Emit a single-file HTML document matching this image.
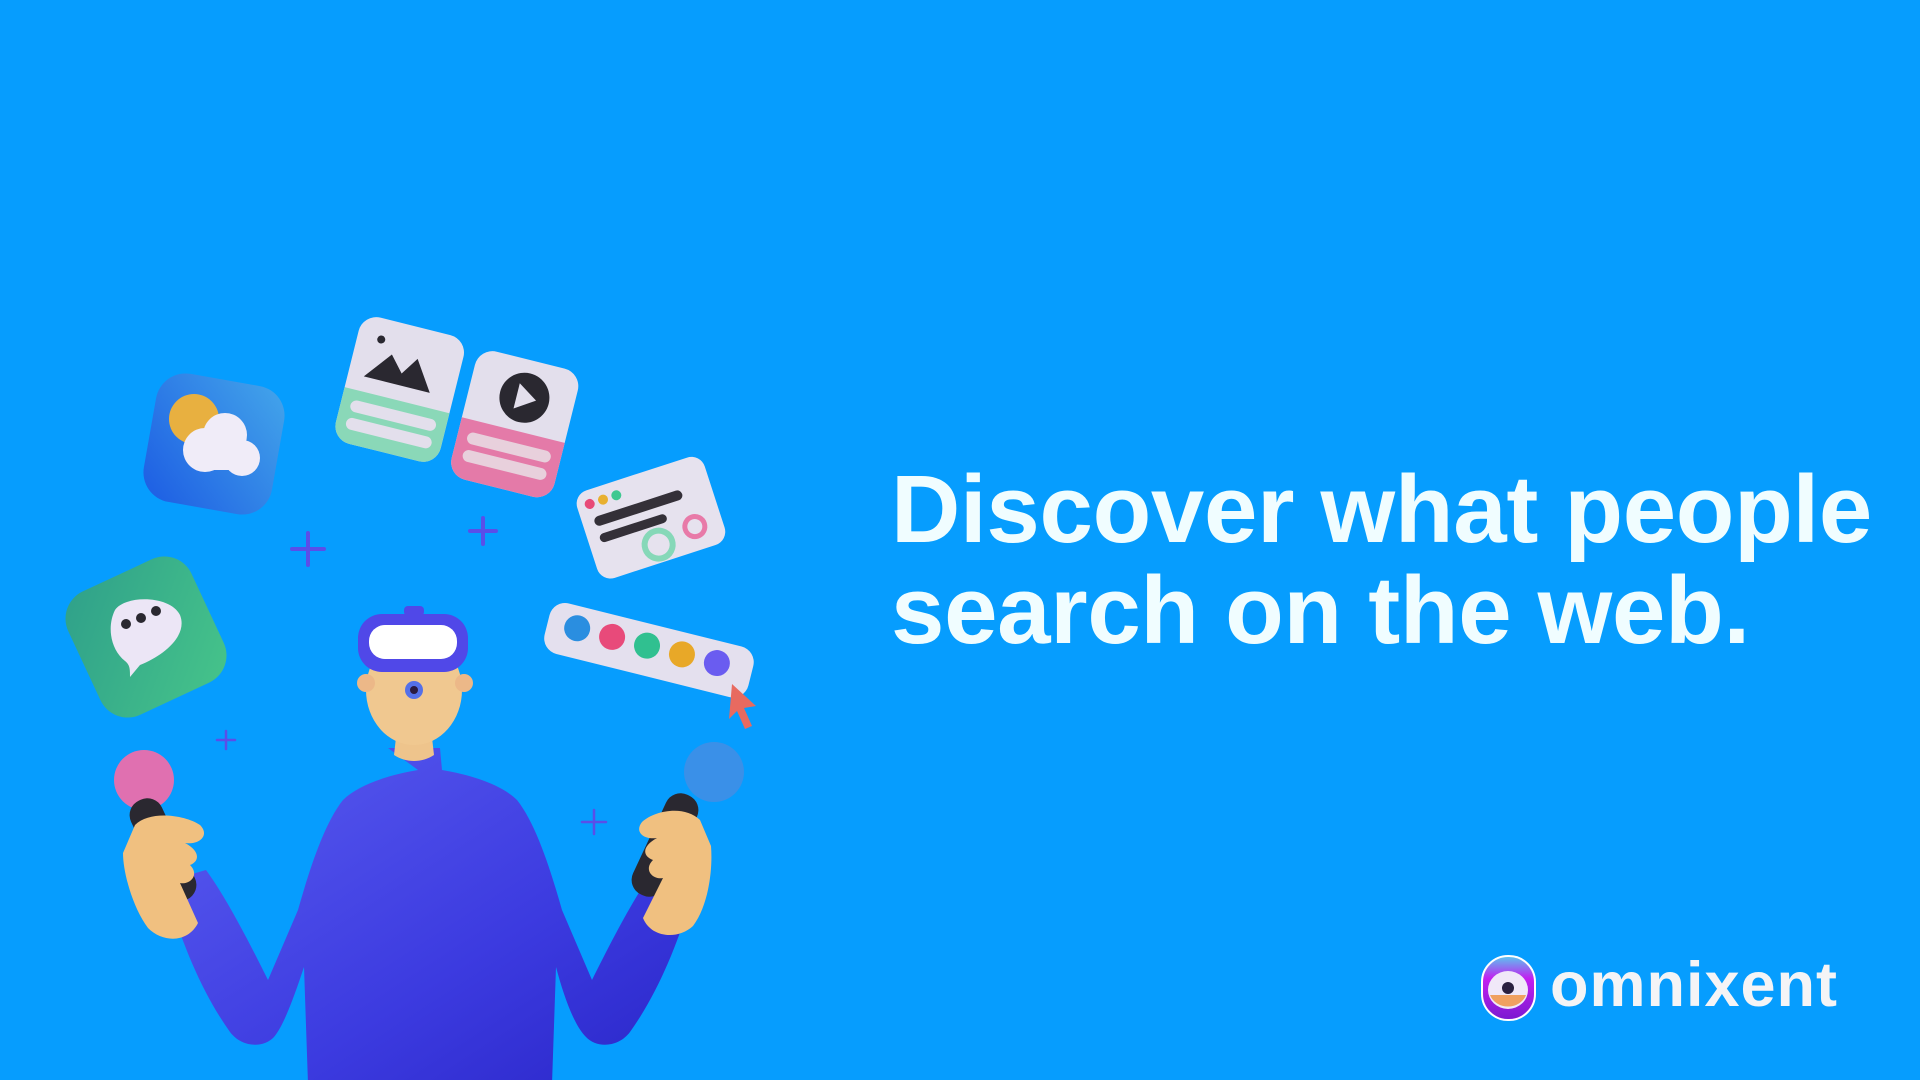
<!DOCTYPE html>
<html><head><meta charset="utf-8"><style>
html,body{margin:0;padding:0}
body{width:1920px;height:1080px;background:#069dfe;position:relative;overflow:hidden;font-family:"Liberation Sans",sans-serif}
.h{position:absolute;left:891px;top:459px;color:#f0fdff;font-weight:bold;font-size:96px;line-height:101px;letter-spacing:-0.3px;white-space:nowrap}
.logo{position:absolute;left:1550px;top:949px;color:#f4f4f6;font-weight:bold;font-size:63px;letter-spacing:1px}
svg{position:absolute;left:0;top:0}
</style></head><body>
<svg width="1920" height="1080" viewBox="0 0 1920 1080">
<defs>
<linearGradient id="wt" x1="0" y1="1" x2="1" y2="0"><stop offset="0" stop-color="#1f55e0"/><stop offset="1" stop-color="#4aa6e8"/></linearGradient>
<linearGradient id="ch" x1="0" y1="0" x2="1" y2="1"><stop offset="0" stop-color="#2fa08a"/><stop offset="1" stop-color="#46c48a"/></linearGradient>
<linearGradient id="bd" x1="0" y1="0" x2="1" y2="1"><stop offset="0" stop-color="#5a5cf0"/><stop offset="0.6" stop-color="#3c3be0"/><stop offset="1" stop-color="#2a26c8"/></linearGradient>
<linearGradient id="lg" x1="0" y1="0" x2="0" y2="1"><stop offset="0" stop-color="#58c8f0"/><stop offset="0.35" stop-color="#c21ff0"/><stop offset="1" stop-color="#7a1ad0"/></linearGradient>
</defs>
<g transform="rotate(10 214 444)"><rect x="149" y="379" width="130" height="130" rx="30" fill="url(#wt)" opacity="0.9"/></g>
<circle cx="194" cy="419" r="25" fill="#e8b040"/>
<g fill="#f0ecf8"><circle cx="205" cy="450" r="22"/><circle cx="225" cy="435" r="22"/><circle cx="242" cy="458" r="18"/><rect x="190" y="445" width="62" height="25" rx="12"/></g>
<g transform="rotate(14 398 388)">
<rect x="346" y="324" width="108" height="130" rx="18" fill="#e3dfec"/>
<path d="M346 400h108v36a18 18 0 0 1-18 18h-72a18 18 0 0 1-18-18z" fill="#8ad8b8"/>
<rect x="356" y="410" width="88" height="12" rx="6" fill="#e3dfec"/><rect x="356" y="428" width="88" height="12" rx="6" fill="#e3dfec"/>
<circle cx="370" cy="345" r="4" fill="#2a2830"/><path d="M362 385l22-28 14 16 12-18 20 30z" fill="#2a2830"/>
</g>
<g transform="rotate(14 514 423)">
<rect x="462" y="358" width="106" height="132" rx="18" fill="#e3dfec"/>
<path d="M462 430h106v42a18 18 0 0 1-18 18h-70a18 18 0 0 1-18-18z" fill="#e47aa8"/>
<rect x="472" y="442" width="86" height="12" rx="6" fill="#e8d0dc"/><rect x="472" y="460" width="86" height="12" rx="6" fill="#e8d0dc"/>
<circle cx="518" cy="396" r="25" fill="#2a2830"/><path d="M510 383l20 13-20 13z" fill="#e3dfec"/>
</g>
<g transform="rotate(-18 650 518)">
<rect x="584" y="472" width="134" height="92" rx="14" fill="#e6e2ee"/>
<circle cx="597" cy="486" r="5" fill="#e84a78"/><circle cx="611" cy="486" r="5" fill="#e8b030"/><circle cx="625" cy="486" r="5" fill="#3ec890"/>
<rect x="596" y="500" width="92" height="10" rx="5" fill="#343038"/><rect x="596" y="518" width="70" height="9" rx="4.5" fill="#343038"/>
<circle cx="650" cy="546" r="14" fill="none" stroke="#86d8b8" stroke-width="6"/><circle cx="690" cy="540" r="10" fill="none" stroke="#e87aa8" stroke-width="5"/>
</g>
<g transform="rotate(14 648 650)">
<rect x="544" y="624" width="210" height="52" rx="16" fill="#e4e0ee"/>
<circle cx="574" cy="646" r="13" fill="#2a8ee0"/><circle cx="610" cy="646" r="13" fill="#e84a7a"/><circle cx="646" cy="646" r="13" fill="#30c090"/><circle cx="682" cy="646" r="13" fill="#e8a828"/><circle cx="718" cy="646" r="13" fill="#6a5cf0"/>
</g>
<path d="M732 684l24 22-12 2 8 18-7 3-8-18-8 8z" fill="#e86a60"/>
<g transform="rotate(-25 146 637)"><rect x="78" y="569" width="136" height="136" rx="30" fill="url(#ch)"/></g>
<path d="M115 610c10-15 55-15 65 5c8 20-15 40-40 50l-10 12c0-8 0-12-5-16c-15-12-18-35-10-51z" fill="#ece6f6"/>
<circle cx="126" cy="624" r="5" fill="#2a2830"/><circle cx="141" cy="618" r="5" fill="#2a2830"/><circle cx="156" cy="611" r="5" fill="#2a2830"/>
<g stroke="#5b4ee8" stroke-width="4" stroke-linecap="round">
<path d="M308 533v32M292 549h32"/><path d="M483 518v26M470 531h26"/>
</g>
<g stroke="#5b4ee8" stroke-width="2.5" stroke-linecap="round"><path d="M226 731v18M217 740h18"/><path d="M594 810v24M582 822h24"/></g>
<path d="M388 748h52l2 22c30 5 60 15 75 30c20 25 35 75 45 110l30 70c15-30 40-80 62-110l28 8 8 24c-15 50-35 95-60 130c-12 16-34 16-44 5c-12-12-22-40-30-70l-4 117h-244l-4-117c-10 30-20 58-30 70c-10 11-32 11-44-5c-25-35-45-80-60-130l8-24 28-8c22 30 47 80 62 110l30-70c10-35 25-85 45-110c15-15 45-25 75-30z" fill="url(#bd)"/>
<path d="M398 720h32l4 35c-12 8-28 8-40 0z" fill="#eec48c"/>
<ellipse cx="414" cy="690" rx="48" ry="55" fill="#f0c890"/>
<circle cx="366" cy="683" r="9" fill="#ecb888"/><circle cx="464" cy="683" r="9" fill="#ecb888"/>
<circle cx="414" cy="690" r="9" fill="#5470e8"/><circle cx="414" cy="690" r="4" fill="#2a1a40"/>
<rect x="358" y="614" width="110" height="58" rx="24" fill="#5048e8"/>
<rect x="369" y="625" width="88" height="34" rx="16" fill="#fff"/>
<rect x="404" y="606" width="20" height="10" rx="4" fill="#5048e8"/>
<circle cx="144" cy="780" r="30" fill="#e070b0"/>
<rect x="146" y="795" width="34" height="110" rx="16" fill="#2a2830" transform="rotate(-25 163 850)"/>
<path d="M135 825c15-15 50-10 65 0c10 10 0 20-15 18c15 8 15 18 5 22c10 10 0 20-10 18l18 40c-10 20-35 20-50 5c-15-20-25-55-25-75z" fill="#f0c080"/>
<circle cx="714" cy="772" r="30" fill="#3a90e8"/>
<rect x="648" y="790" width="34" height="110" rx="16" fill="#2a2830" transform="rotate(25 665 845)"/>
<path d="M700 820c-15-15-45-10-58 2c-8 10 2 18 15 16c-15 8-15 18-4 22c-10 10 0 20 10 18l-20 40c8 20 35 22 50 8c15-20 20-55 18-80z" fill="#f0c080"/>
<rect x="1482" y="956" width="53" height="64" rx="26" fill="url(#lg)" stroke="#fff" stroke-width="2"/>
<ellipse cx="1508" cy="990" rx="20" ry="19" fill="#f0e8f8"/>
<path d="M1490 995a19 17 0 0 0 36 0z" fill="#f0a060"/>
<circle cx="1508" cy="988" r="6" fill="#2a2040"/>
</svg>
<div class="h">Discover what people<br>search on the web.</div>
<div class="logo">omnixent</div>
</body></html>
